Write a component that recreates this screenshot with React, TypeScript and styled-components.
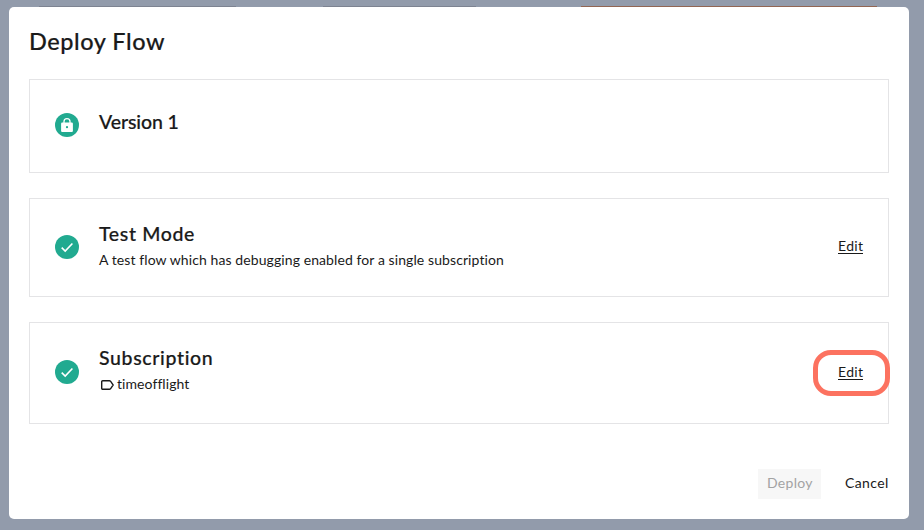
import React from "react";
import styled, { createGlobalStyle } from "styled-components";

const GlobalStyle = createGlobalStyle`
  *, *::before, *::after { box-sizing: border-box; }
  html, body { margin: 0; padding: 0; }
  body { background: #929bab; overflow: hidden; }
`;

const Backdrop = styled.div`
  width: 924px;
  height: 530px;
  padding: 0 15px 11px 9px;
  display: flex;
  flex-direction: column;
  background: #929bab;
  font-family: Lato, "Liberation Sans", sans-serif;
  color: #1a1a1a;
`;

const PageEdge = styled.div`
  height: 7px;
  flex: none;
  display: grid;
  grid-template-columns: 197px 87px 153px 105px 296px;
  align-items: end;
  padding-left: 30px;
`;

const Strip = styled.span<{ $col: number; $color: string }>`
  grid-row: 1;
  grid-column: ${(p) => p.$col};
  height: 1px;
  background: ${(p) => p.$color};
`;

const Modal = styled.section`
  height: 512px;
  padding: 20px;
  display: flex;
  flex-direction: column;
  background: #fff;
  border-radius: 5px;
`;

const Title = styled.h1`
  margin: -1px 0 23px;
  height: 30px;
  font-size: 23.5px;
  line-height: 30px;
  font-weight: 500;
  letter-spacing: 0.55px;
  -webkit-text-stroke: 0.2px;
  white-space: nowrap;
`;

const Cards = styled.div`
  display: flex;
  flex-direction: column;
  gap: 25px;
`;

const Card = styled.div<{ $height: number }>`
  height: ${(p) => p.$height}px;
  padding: 0 25px;
  display: flex;
  align-items: flex-start;
  border: 1px solid #e4e4e6;
`;

const Status = styled.span<{ $top: number }>`
  width: 24px;
  height: 24px;
  margin-top: ${(p) => p.$top}px;
  flex: none;
  display: flex;
  align-items: center;
  justify-content: center;
  border-radius: 50%;
  background: #21aa90;
`;

const CardBody = styled.div<{ $top: number }>`
  flex: 1;
  padding: ${(p) => p.$top}px 0 0 20px;
`;

const CardTitle = styled.h2<{ $spacing: number }>`
  margin: 0;
  font-size: 19.5px;
  line-height: 26px;
  font-weight: 500;
  letter-spacing: ${(p) => p.$spacing}px;
  -webkit-text-stroke: 0.2px;
`;

const CardText = styled.p<{ $spacing: number }>`
  margin: 2px 0 0;
  display: flex;
  align-items: center;
  font-size: 14px;
  line-height: 22px;
  letter-spacing: ${(p) => p.$spacing}px;
  white-space: nowrap;
`;

const TagIcon = styled.svg`
  margin: 2px 3px 0 2px;
  flex: none;
`;

const EditSlot = styled.div<{ $top: number }>`
  position: relative;
  margin-top: ${(p) => p.$top}px;
`;

const EditLink = styled.a`
  display: block;
  width: 25px;
  height: 17px;
  border-bottom: 1px solid #1a1a1a;
  font-size: 14px;
  line-height: 17px;
  letter-spacing: 0.35px;
  white-space: nowrap;
`;

const Highlight = styled.span`
  position: absolute;
  left: -25px;
  top: -13px;
  width: 77px;
  height: 46px;
  border: 5px solid #fc7260;
  border-radius: 18px;
  pointer-events: none;
`;

const Footer = styled.footer`
  margin-top: 45px;
  display: flex;
  justify-content: flex-end;
  align-items: center;
  gap: 24px;
`;

const FooterButton = styled.button<{ $muted?: boolean; $spacing: number }>`
  height: 30px;
  width: ${(p) => (p.$muted ? 63 : 44)}px;
  padding: ${(p) => (p.$muted ? "0 0 2px 9px" : "0 0 2px")};
  border: 0;
  background: ${(p) => (p.$muted ? "#f7f7f7" : "transparent")};
  color: ${(p) => (p.$muted ? "#a3a3a3" : "#1a1a1a")};
  font: 400 14px/28px Lato, "Liberation Sans", sans-serif;
  letter-spacing: ${(p) => p.$spacing}px;
  text-align: left;
  white-space: nowrap;
`;

const LockGlyph = () => (
  <svg width="14" height="16" viewBox="0 0 14 16">
    <path d="M4 7V4.6a3 3 0 0 1 6 0V7" fill="none" stroke="#fff" strokeWidth="1.3" />
    <path
      fill="#fff"
      fillRule="evenodd"
      d="M2.2 5.6h9.6a1.1 1.1 0 0 1 1.1 1.1v7.2a1.1 1.1 0 0 1-1.1 1.1H2.2a1.1 1.1 0 0 1-1.1-1.1V6.7A1.1 1.1 0 0 1 2.2 5.6ZM7 9.1a1.1 1.1 0 1 0 0 2.2 1.1 1.1 0 0 0 0-2.2Z"
    />
  </svg>
);

const CheckGlyph = () => (
  <svg width="24" height="24" viewBox="0 0 24 24">
    <path d="M6.7 12.6 10.2 16 17.4 8.5" fill="none" stroke="#fff" strokeWidth="1.6" />
  </svg>
);

export default function App() {
  return (
    <>
      <GlobalStyle />
      <Backdrop>
        <PageEdge>
          <Strip $col={1} $color="#7d8391" />
          <Strip $col={3} $color="#7d8391" />
          <Strip $col={5} $color="#926653" />
        </PageEdge>
        <Modal>
          <Title>Deploy Flow</Title>
          <Cards>
            <Card $height={94}>
              <Status $top={33}>
                <LockGlyph />
              </Status>
              <CardBody $top={29}>
                <CardTitle $spacing={-0.1}>Version 1</CardTitle>
              </CardBody>
            </Card>
            <Card $height={99}>
              <Status $top={36}>
                <CheckGlyph />
              </Status>
              <CardBody $top={22}>
                <CardTitle $spacing={0.65}>Test Mode</CardTitle>
                <CardText $spacing={0.09}>
                  A test flow which has debugging enabled for a single subscription
                </CardText>
              </CardBody>
              <EditSlot $top={38}>
                <EditLink>Edit</EditLink>
              </EditSlot>
            </Card>
            <Card $height={102}>
              <Status $top={37}>
                <CheckGlyph />
              </Status>
              <CardBody $top={22}>
                <CardTitle $spacing={0.65}>Subscription</CardTitle>
                <CardText $spacing={0.07}>
                  <TagIcon width="13" height="10" viewBox="0 0 13 10">
                    <path
                      d="M1.7.7h6.7c.5 0 .8.2 1.1.5L12.2 5 9.5 8.8c-.3.3-.6.5-1.1.5H1.7a1 1 0 0 1-1-1V1.7a1 1 0 0 1 1-1Z"
                      fill="none"
                      stroke="#1a1a1a"
                      strokeWidth="1.4"
                    />
                  </TagIcon>
                  timeofflight
                </CardText>
              </CardBody>
              <EditSlot $top={40}>
                <EditLink>Edit</EditLink>
                <Highlight />
              </EditSlot>
            </Card>
          </Cards>
          <Footer>
            <FooterButton $muted $spacing={0.3} disabled>
              Deploy
            </FooterButton>
            <FooterButton $spacing={0.4}>Cancel</FooterButton>
          </Footer>
        </Modal>
      </Backdrop>
    </>
  );
}
